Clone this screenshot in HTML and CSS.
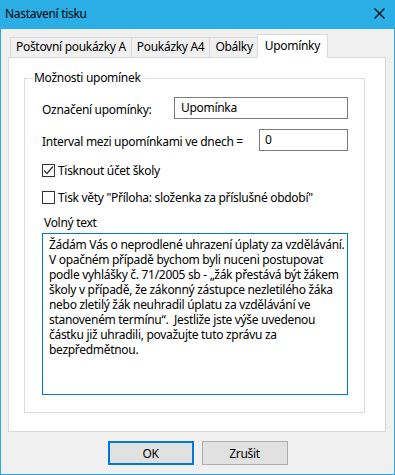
FILE: index.html
```html
<!DOCTYPE html>
<html>
<head>
  <title>Nastavení tisku</title>
  <link rel="stylesheet" href="styles.css">
</head>
<body>
  <div class="window">
    <div class="titlebar">
      <span class="title">Nastavení tisku</span>
      <svg class="close" width="11" height="11" viewBox="0 0 11 11">
        <path d="M0.5 0.5 L10.5 10.5 M10.5 0.5 L0.5 10.5" stroke="#000" stroke-width="1.1" fill="none"/>
      </svg>
    </div>

    <div class="content">
      <div class="tabs">
        <div class="tab">Poštovní poukázky A</div>
        <div class="tab">Poukázky A4</div>
        <div class="tab">Obálky</div>
        <div class="tab active">Upomínky</div>
      </div>

      <div class="panel">
        <div class="group">
          <div class="group-title">Možnosti upomínek</div>

          <div class="row first">
            <label>Označení upomínky:</label>
            <input class="field wide" value="Upomínka" />
          </div>
          <div class="row">
            <label>Interval mezi upomínkami ve dnech =</label>
            <input class="field narrow" value="0" />
          </div>

          <div class="check-row">
            <span class="checkbox">
              <svg width="11" height="11" viewBox="0 0 11 11">
                <path d="M1 5.5 L4 8.5 L10 1.5" stroke="#333" stroke-width="1.2" fill="none"/>
              </svg>
            </span>
            <span>Tisknout účet školy</span>
          </div>
          <div class="check-row">
            <span class="checkbox"></span>
            <span>Tisk věty "Příloha: složenka za příslušné období"</span>
          </div>

          <div class="memo-label">Volný text</div>
          <div class="memo">Žádám Vás o neprodlené uhrazení úplaty za vzdělávání.
V opačném případě bychom byli nuceni postupovat
podle vyhlášky č. 71/2005 sb - „žák přestává být žákem
školy v případě, že zákonný zástupce nezletilého žáka
nebo zletilý žák neuhradil úplatu za vzdělávání ve
stanoveném termínu“.  Jestliže jste výše uvedenou
částku již uhradili, považujte tuto zprávu za
bezpředmětnou.</div>
        </div>
      </div>

      <div class="buttons">
        <button class="btn default">OK</button>
        <button class="btn">Zrušit</button>
      </div>
    </div>
  </div>
</body>
</html>
```

FILE: styles.css
```css
body {
  margin: 0;
  background-color: #f0f0f0;
  font-family: "Noto Sans", "Open Sans", sans-serif;
  font-size: 12px;
  letter-spacing: -0.3px;
  color: #000;
}

.window {
  width: 395px;
  height: 475px;
  box-sizing: border-box;
  border: 1px solid #2aa6e0;
  border-top: none;
  background-color: #f0f0f0;
}

.titlebar {
  height: 29px;
  margin: 0 -1px;
  background-color: #2baee5;
  display: flex;
  align-items: center;
  justify-content: space-between;
  padding: 0 10px 3px 5px;
  box-sizing: border-box;
}

.title {
  font-size: 12px;
}

.content {
  padding: 5px 8px 0 7px;
}

/* tabs */
.tabs {
  display: flex;
  align-items: flex-end;
  padding-left: 2px;
  height: 23px;
}

.tab {
  height: 19px;
  line-height: 18px;
  padding: 0 5px;
  border: 1px solid #d9d9d9;
  border-bottom: none;
  background-color: #f0f0f0;
  margin-right: -1px;
}

.tab.active {
  height: 23px;
  line-height: 21px;
  background-color: #fff;
  margin: 0 -2px -1px -1px;
  padding: 0 7px;
  position: relative;
  z-index: 1;
}

.panel {
  height: 375px;
  box-sizing: border-box;
  border: 1px solid #d9d9d9;
  background-color: #fff;
  padding: 20px 20px 0 15px;
}

/* group box */
.group {
  border: 1px solid #dcdcdc;
  height: 335px;
  box-sizing: border-box;
  padding: 0 16px 0 17px;
}

.group-title {
  width: fit-content;
  margin: -9px 0 0 -9px;
  padding: 0 2px 0 1px;
  background-color: #fff;
  line-height: 16px;
}

.row {
  display: flex;
  align-items: center;
  justify-content: space-between;
  margin-top: 10px;
  height: 22px;
}

.row.first {
  margin-top: 11px;
}

.row label {
  padding-top: 2px;
}

.field {
  height: 22px;
  box-sizing: border-box;
  border: 1px solid #7a7a7a;
  font-family: inherit;
  font-size: 12px;
  letter-spacing: -0.3px;
  padding: 0 0 1px 6px;
  margin: 0;
  outline: none;
}

.field.wide {
  width: 174px;
}

.field.narrow {
  width: 89px;
  padding-left: 5px;
}

.check-row {
  display: flex;
  align-items: center;
  height: 15px;
  margin-top: 12px;
}

.checkbox {
  width: 13px;
  height: 13px;
  box-sizing: border-box;
  border: 1px solid #333;
  margin-right: 3px;
  display: flex;
  align-items: center;
  justify-content: center;
}

.memo-label {
  margin: 10px 0 0 2px;
  line-height: 15px;
}

.memo {
  margin-top: 3px;
  height: 162px;
  box-sizing: border-box;
  border: 1px solid #0078d7;
  padding: 3px 4px 0 6px;
  white-space: pre;
  overflow: hidden;
  line-height: 15px;
}

/* buttons */
.buttons {
  display: flex;
  justify-content: center;
  gap: 8px;
  margin-top: 9px;
  padding-left: 1px;
}

.btn {
  width: 86px;
  height: 24px;
  box-sizing: border-box;
  border: 1px solid #adadad;
  background-color: #e1e1e1;
  font-family: inherit;
  font-size: 12px;
  letter-spacing: -0.3px;
  color: #000;
  padding: 0;
}

.btn.default {
  border: 2px solid #0078d7;
}
```
